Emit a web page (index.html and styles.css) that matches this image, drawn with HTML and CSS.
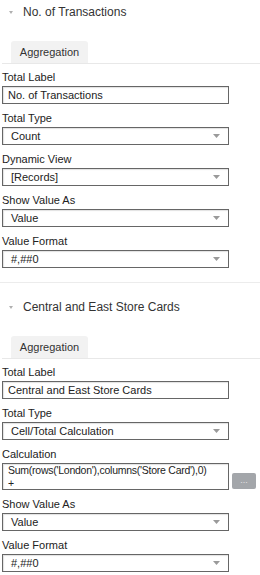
FILE: index.html
```html
<!DOCTYPE html>
<html>
<head>
<meta charset="utf-8">
<link rel="stylesheet" href="styles.css">
</head>
<body>
<div class="section">
  <div class="section-header"><span class="caret"></span><span class="title">No. of Transactions</span></div>
  <div class="tabs"><div class="tab">Aggregation</div></div>
  <div class="fields">
    <div class="field">
      <div class="label">Total Label</div>
      <input class="control input" type="text" value="No. of Transactions">
    </div>
    <div class="field">
      <div class="label">Total Type</div>
      <div class="control select"><span>Count</span><svg class="arrow" width="7" height="4" viewBox="0 0 7 4"><path d="M0 0H7L3.5 4Z" fill="#9a9a9a"/></svg></div>
    </div>
    <div class="field">
      <div class="label">Dynamic View</div>
      <div class="control select"><span>[Records]</span><svg class="arrow" width="7" height="4" viewBox="0 0 7 4"><path d="M0 0H7L3.5 4Z" fill="#9a9a9a"/></svg></div>
    </div>
    <div class="field">
      <div class="label">Show Value As</div>
      <div class="control select"><span>Value</span><svg class="arrow" width="7" height="4" viewBox="0 0 7 4"><path d="M0 0H7L3.5 4Z" fill="#9a9a9a"/></svg></div>
    </div>
    <div class="field">
      <div class="label">Value Format</div>
      <div class="control select"><span>#,##0</span><svg class="arrow" width="7" height="4" viewBox="0 0 7 4"><path d="M0 0H7L3.5 4Z" fill="#9a9a9a"/></svg></div>
    </div>
  </div>
</div>
<div class="separator"></div>
<div class="section second">
  <div class="section-header"><span class="caret"></span><span class="title">Central and East Store Cards</span></div>
  <div class="tabs"><div class="tab">Aggregation</div></div>
  <div class="fields">
    <div class="field">
      <div class="label">Total Label</div>
      <input class="control input" type="text" value="Central and East Store Cards">
    </div>
    <div class="field">
      <div class="label">Total Type</div>
      <div class="control select"><span>Cell/Total Calculation</span><svg class="arrow" width="7" height="4" viewBox="0 0 7 4"><path d="M0 0H7L3.5 4Z" fill="#9a9a9a"/></svg></div>
    </div>
    <div class="field">
      <div class="label">Calculation</div>
      <div class="calc-row">
        <div class="control textarea"><div>Sum(rows('London'),columns('Store Card'),0)</div><div>+</div></div>
        <div class="dots-btn">...</div>
      </div>
    </div>
    <div class="field">
      <div class="label">Show Value As</div>
      <div class="control select"><span>Value</span><svg class="arrow" width="7" height="4" viewBox="0 0 7 4"><path d="M0 0H7L3.5 4Z" fill="#9a9a9a"/></svg></div>
    </div>
    <div class="field">
      <div class="label">Value Format</div>
      <div class="control select"><span>#,##0</span><svg class="arrow" width="7" height="4" viewBox="0 0 7 4"><path d="M0 0H7L3.5 4Z" fill="#9a9a9a"/></svg></div>
    </div>
  </div>
</div>
</body>
</html>
```
FILE: styles.css
```css
html, body {
  margin: 0;
  padding: 0;
  background: #fff;
}
body {
  width: 260px;
  font-family: "Liberation Sans", Arial, sans-serif;
  color: #333;
}
.section {
  padding-bottom: 6px;
}
.section.second {
  padding-top: 12px;
}
.section-header {
  height: 24px;
  display: flex;
  align-items: center;
  padding-left: 9px;
  font-size: 12px;
  color: #333;
}
.caret {
  width: 0;
  height: 0;
  border-left: 2.5px solid transparent;
  border-right: 2.5px solid transparent;
  border-top: 3px solid #b0b0b0;
  margin-right: 10px;
}
.tabs {
  display: flex;
  margin: 17px 0 0 2px;
  padding-left: 9px;
  border-bottom: 1px solid #e8e8e8;
}
.tab {
  width: 77px;
  height: 22px;
  background: #f2f2f2;
  border-radius: 3px 3px 0 0;
  font-size: 11px;
  display: flex;
  align-items: center;
  justify-content: center;
}
.fields {
  padding: 7px 0 0 2px;
}
.field {
  margin-bottom: 8px;
}
.label {
  font-size: 11px;
  line-height: 13px;
  margin-bottom: 2px;
  color: #222;
}
.control {
  display: block;
  width: 227px;
  height: 18px;
  box-sizing: border-box;
  margin: 0;
  border: 1px solid #666;
  box-shadow: inset 1px 1px 1px rgba(0, 0, 0, 0.12);
  background: #fff;
  font-family: "Liberation Sans", Arial, sans-serif;
  font-size: 11px;
  color: #222;
}
.input {
  padding: 0 5px;
  outline: none;
}
.select {
  display: flex;
  align-items: center;
  justify-content: space-between;
  padding: 0 8px 0 8px;
}
.arrow {
  display: block;
}
.calc-row {
  display: flex;
  align-items: flex-end;
}
.textarea {
  height: 27px;
  padding: 0 5px;
  font-size: 10.5px;
  letter-spacing: -0.25px;
  line-height: 13px;
  white-space: nowrap;
  overflow: hidden;
}
.dots-btn {
  width: 24px;
  height: 16px;
  margin: 0 0 1px 3px;
  background: #a3a6aa;
  border-radius: 2px;
  color: #e4e4e4;
  font-size: 9px;
  line-height: 14px;
  text-align: center;
}
.separator {
  height: 1px;
  background: #ececec;
}
```
